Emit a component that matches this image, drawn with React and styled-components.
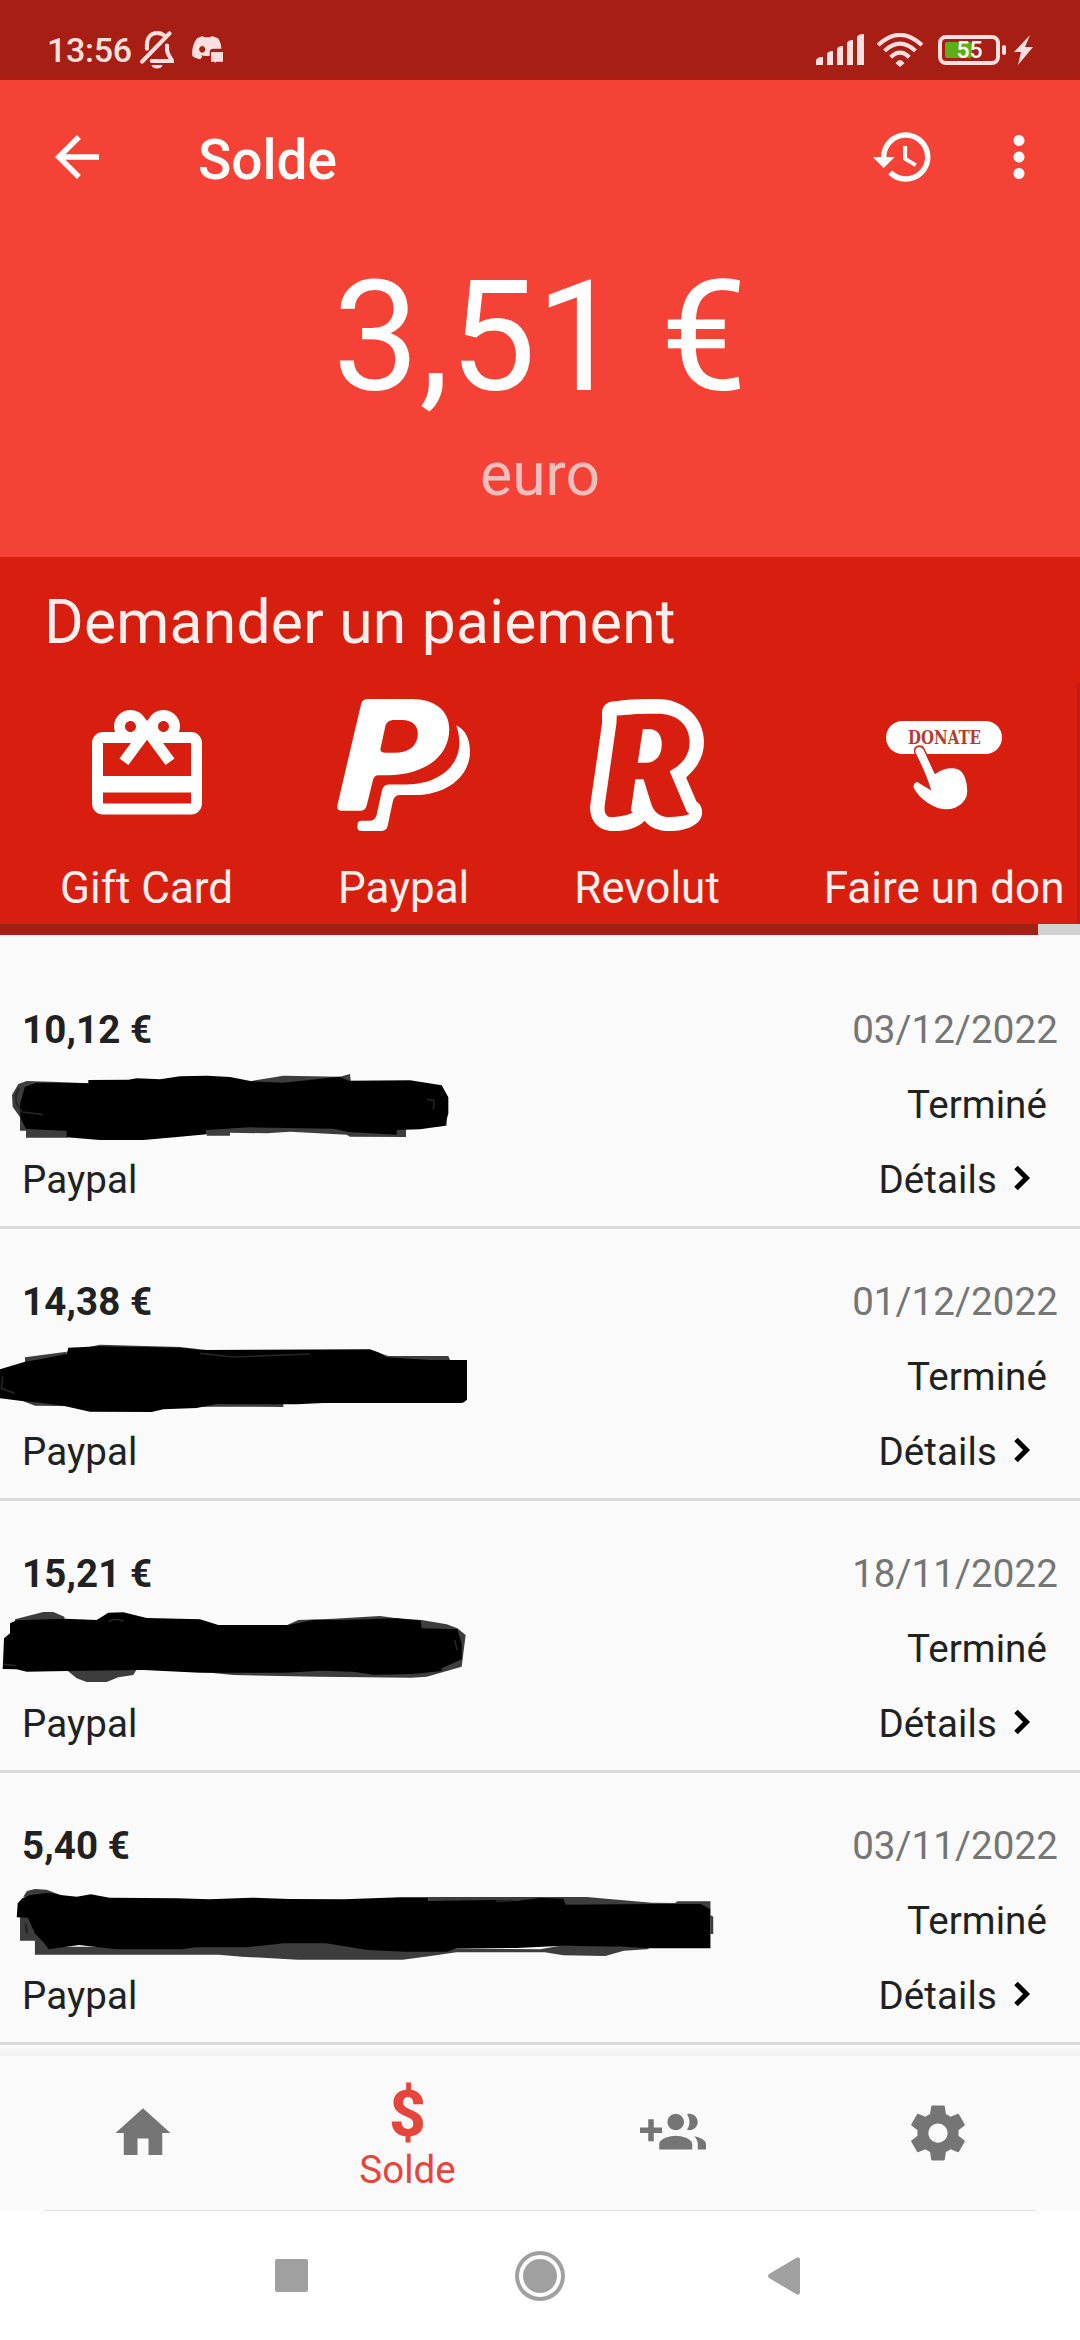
import React from 'react';
import styled, {createGlobalStyle} from 'styled-components';
import {MdHome} from 'react-icons/md';

const GlobalStyle = createGlobalStyle`
  body {
    margin: 0;
    background: #fff;
    font-family: Roboto, "Liberation Sans", sans-serif;
  }

  svg {
    display: block;
    flex: none;
  }
`;

const Screen = styled.div`
  display: flex;
  flex-direction: column;
  width: 1080px;
  height: 2340px;
  overflow: hidden;
  background: #fafafa;
`;

const StatusBar = styled.div`
  display: flex;
  justify-content: space-between;
  box-sizing: border-box;
  height: 80px;
  padding: 19px 47px 0;
  background: #a61e14;
  color: #ffe0de;
`;

const StatusGroup = styled.div`
  display: flex;
  align-items: center;
  gap: ${({$gap}) => $gap}px;
`;

const Clock = styled.span`
  width: 75px;
  padding-top: 1px;
  font-size: 34px;
  font-weight: 500;
  letter-spacing: -0.3px;
  line-height: 40px;
  white-space: nowrap;
`;

const Battery = styled.div`
  position: relative;
  display: flex;
  width: 68px;
  height: 30px;
  margin: 0 -5px 0 2px;
`;

const BatteryLevel = styled.span`
  position: absolute;
  left: 0;
  top: 1px;
  width: 63px;
  color: #fff;
  font-size: 23px;
  font-weight: 500;
  line-height: 30px;
  text-align: center;
`;

const Header = styled.header`
  height: 477px;
  background: #f44336;
  color: #fff;
`;

const Toolbar = styled.div`
  display: flex;
  align-items: center;
  height: 154px;
  padding: 0 28px 0 44px;
`;

const ToolbarTitle = styled.h1`
  flex: 1;
  margin: 0;
  padding: 6px 0 0 88px;
  font-size: 55px;
  font-weight: 500;
  line-height: 64px;
`;

const ToolbarActions = styled.div`
  display: flex;
  gap: 50px;
`;

const Balance = styled.div`
  padding-top: 14px;
  font-size: 154px;
  line-height: 180px;
  text-align: center;
`;

const Currency = styled.div`
  margin-top: 12px;
  color: #f0bebd;
  font-size: 60.5px;
  line-height: 70px;
  text-align: center;
`;

const Payout = styled.section`
  position: relative;
  box-sizing: border-box;
  height: 367px;
  padding-top: 31px;
  background: #d81e0f;
  color: #fff0ee;

  /* edge of the next card, still scrolled out of view */
  &::after {
    content: '';
    position: absolute;
    right: 0;
    top: 126px;
    bottom: 0;
    width: 3px;
    background: #c41c10;
  }
`;

const PayoutTitle = styled.h2`
  margin: 0 0 41px;
  padding-left: 44px;
  font-size: 60.5px;
  font-weight: 400;
  letter-spacing: 0.26px;
  line-height: 70px;
`;

const PayoutMethods = styled.div`
  display: flex;
  gap: 104px;
  padding-left: 60px;
`;

const Method = styled.div`
  display: flex;
  flex-direction: column;
  align-items: center;
`;

const MethodIcon = styled.div`
  display: flex;
  align-items: center;
  justify-content: center;
  height: 132px;
  margin-bottom: 31px;
  color: #fff;
`;

const MethodLabel = styled.span`
  font-size: 44px;
  line-height: 52px;
  white-space: nowrap;
`;

const ScrollTrack = styled.div`
  height: 11px;
  flex: none;
  background: #d2d2d2;
`;

const ScrollThumb = styled.div`
  width: 1038px;
  height: 11px;
  background: #a41f16;
`;

const History = styled.main`
  height: 1121px;
  box-sizing: border-box;
  padding-top: 22px;
  background: linear-gradient(#fafafa 1111px, #f2f2f2 1121px);
`;

const Row = styled.div`
  position: relative;
  display: flex;
  justify-content: space-between;
  box-sizing: border-box;
  height: 272px;
  padding: 35px 22px 0;
  border-bottom: 3px solid #dadada;
  color: #212121;
  font-size: 38.5px;
  letter-spacing: 0.1px;
  line-height: 75px;
`;

const Column = styled.div`
  display: flex;
  flex-direction: column;
  align-items: ${({$end}) => ($end ? 'flex-end' : 'flex-start')};
`;

const Amount = styled.span`
  height: 75px;
  font-weight: 700;
`;

const Provider = styled.span`
  margin-top: 75px;
`;

const DateText = styled.span`
  color: #757575;
`;

const Status = styled.span`
  padding-right: 11px;
`;

const Details = styled.span`
  display: flex;
  align-items: center;
  gap: 17px;
  padding-right: 27px;

  svg {
    margin-bottom: 4px;
  }
`;

const Marker = styled.svg`
  position: absolute;
  left: 0;
  top: ${({$top}) => $top}px;
`;

const BottomNav = styled.nav`
  display: grid;
  grid-template-columns: repeat(4, 265px);
  justify-content: center;
  height: 154px;
  background: #fafafa;
  color: #757575;
`;

const NavItem = styled.div`
  display: flex;
  flex-direction: column;
  align-items: center;
  justify-content: center;
  padding-top: ${({$active}) => ($active ? 8 : 0)}px;
  color: ${({$active}) => ($active ? '#e5453a' : 'inherit')};
`;

const Dollar = styled.span`
  font-size: 64px;
  font-weight: 800;
  line-height: 64px;
`;

const NavLabel = styled.span`
  font-size: 38.5px;
  line-height: 45px;
`;

const SystemBar = styled.div`
  display: flex;
  flex-direction: column;
  height: 130px;
  background: #fff;
`;

const SystemDivider = styled.div`
  height: 1px;
  margin: 0 44px;
  background: #e2e2e2;
`;

const SystemButtons = styled.div`
  display: flex;
  align-items: center;
  height: 129px;
  padding-left: 275px;
`;

const Recents = styled.div`
  width: 33px;
  height: 33px;
  border-radius: 2px;
  background: #a0a0a0;
`;

const HomeRing = styled.div`
  display: flex;
  align-items: center;
  justify-content: center;
  box-sizing: border-box;
  width: 50px;
  height: 50px;
  margin: 0 203px 0 207px;
  border: 4px solid #a0a0a0;
  border-radius: 50%;
`;

const HomeDot = styled.div`
  width: 34px;
  height: 34px;
  border-radius: 50%;
  background: #a0a0a0;
`;

const MaterialIcon = ({size, d}) => (
  <svg width={size} height={size} viewBox="0 0 24 24" fill="currentColor">
    <path d={d} />
  </svg>
);

const icons = {
  back: 'M20 11H7.83l5.59-5.59L12 4l-8 8 8 8 1.41-1.41L7.83 13H20v-2z',
  history: 'M13 3a9 9 0 0 0-9 9H1l3.89 3.89.07.14L9 12H6c0-3.87 3.13-7 7-7s7 3.13 7 7-3.13 7-7 7c-1.93 0-3.68-.79-4.94-2.06l-1.42 1.42A8.954 8.954 0 0 0 13 21a9 9 0 0 0 0-18zm-1 5v5l4.28 2.54.72-1.21-3.5-2.08V8H12z',
  more: 'M12 8c1.1 0 2-.9 2-2s-.9-2-2-2-2 .9-2 2 .9 2 2 2zm0 2c-1.1 0-2 .9-2 2s.9 2 2 2 2-.9 2-2-.9-2-2-2zm0 6c-1.1 0-2 .9-2 2s.9 2 2 2 2-.9 2-2-.9-2-2-2z',
  gift: 'M20 6h-2.18c.11-.31.18-.65.18-1a2.996 2.996 0 0 0-5.5-1.65l-.5.67-.5-.68C10.96 2.54 10.05 2 9 2 7.34 2 6 3.34 6 5c0 .35.07.69.18 1H4c-1.11 0-1.99.89-1.99 2L2 19c0 1.11.89 2 2 2h16c1.11 0 2-.89 2-2V8c0-1.11-.89-2-2-2zm-5-2c.55 0 1 .45 1 1s-.45 1-1 1-1-.45-1-1 .45-1 1-1zM9 4c.55 0 1 .45 1 1s-.45 1-1 1-1-.45-1-1 .45-1 1-1zm11 15H4v-2h16v2zm0-5H4V8h5.08L7 10.83 8.62 12 11 8.76l1-1.36 1 1.36L15.38 12 17 10.83 14.92 8H20v6z',
  invite: 'M8 10H5V7H3v3H0v2h3v3h2v-3h3v-2zm10 1c1.66 0 2.99-1.34 2.99-3S19.66 5 18 5c-.32 0-.63.05-.91.14.57.81.9 1.79.9 2.86s-.34 2.04-.9 2.86c.28.09.59.14.91.14zm-5 0c1.66 0 2.99-1.34 2.99-3S14.66 5 13 5s-3 1.34-3 3 1.34 3 3 3zm6.62 2.16c.83.73 1.38 1.66 1.38 2.84v2h3v-2c0-1.54-2.37-2.49-4.38-2.84zM13 13c-2 0-6 1-6 3v2h12v-2c0-2-4-3-6-3z',
  settings: 'M19.43 12.98c.04-.32.07-.64.07-.98s-.03-.66-.07-.98l2.11-1.65c.19-.15.24-.42.12-.64l-2-3.46c-.12-.22-.39-.3-.61-.22l-2.49 1c-.52-.4-1.08-.73-1.69-.98l-.38-2.65C14.46 2.18 14.25 2 14 2h-4c-.25 0-.46.18-.49.42l-.38 2.65c-.61.25-1.17.59-1.69.98l-2.49-1c-.23-.09-.49 0-.61.22l-2 3.46c-.13.22-.07.49.12.64l2.11 1.65c-.04.32-.07.65-.07.98s.03.66.07.98l-2.11 1.65c-.19.15-.24.42-.12.64l2 3.46c.12.22.39.3.61.22l2.49-1c.52.4 1.08.73 1.69.98l.38 2.65c.03.24.24.42.49.42h4c.25 0 .46-.18.49-.42l.38-2.65c.61-.25 1.17-.59 1.69-.98l2.49 1c.23.09.49 0 .61-.22l2-3.46c.12-.22.07-.49-.12-.64l-2.11-1.65zM12 15.5c-1.93 0-3.5-1.57-3.5-3.5s1.57-3.5 3.5-3.5 3.5 1.57 3.5 3.5-1.57 3.5-3.5 3.5z',
};

const MutedBell = () => (
  <svg width="34" height="38" viewBox="408 93 98 113" preserveAspectRatio="none" fill="none" stroke="currentColor" strokeWidth="12" strokeLinecap="round">
    <path d="M414 184L493 100M428 146v-11c0-23 12-36 29-36 8 0 14 2 19 6" />
    <path d="M486 136v14c1 16 12 22 14 32h-58" />
    <path d="M441 194h32c-3 14-29 14-32 0z" fill="currentColor" stroke="none" />
  </svg>
);

const DiscordChat = () => (
  <svg width="31" height="27" viewBox="557 110 91 81" preserveAspectRatio="none" fill="currentColor">
    <path
      fillRule="evenodd"
      d="M572 117l16-7 5 4h18l5-4 17 7c7 9 10 20 10 31h-24c-7 0-10 4-10 10v11c-9 1-17 1-25-1l3 4-6 8c-8-2-17-5-23-10-2-18 2-38 14-53zm15 23a9 10 0 1 0 .1 0z"
    />
    <path d="M613 158h35v29h-20l-4 5v-5h-11z" />
  </svg>
);

const Signal = () => (
  <svg width="48" height="31" viewBox="0 0 48 31" fill="currentColor">
    <path d="M0 31v-4q0-4 7-4v8zM11 31V20q1-3 6-3v14zM21 31V15q1-3 6-3v19zM31 31V9q1-3 6-3v25zM41 31V3q1-3 7-3v31z" />
  </svg>
);

const Wifi = () => (
  <svg width="46" height="34" viewBox="978 97 134 101" preserveAspectRatio="none" fill="none" stroke="currentColor" strokeWidth="12">
    <path d="M981 133Q1045 72 1109 133M1000 150Q1045 107 1090 150M1018 169Q1045 142 1072 169" />
    <path d="M1032 187Q1045 168 1058 187L1045 198z" fill="currentColor" stroke="none" />
  </svg>
);

const BatteryShape = () => (
  <svg width="68" height="30" viewBox="0 0 68 30">
    <rect x="2" y="2" width="58" height="26" rx="6" fill="none" stroke="currentColor" strokeWidth="4" />
    <rect x="7" y="7" width="27" height="16" rx="2" fill="#5eae1a" />
    <rect x="64" y="10" width="4" height="10" rx="2" fill="currentColor" />
  </svg>
);

const Bolt = () => (
  <svg width="19" height="30" viewBox="0 0 19 30" fill="currentColor">
    <path d="M16 0L0 17h7L4 30l15-18h-8z" />
  </svg>
);

const PaypalLogo = () => (
  <svg width="133" height="132" viewBox="984 416 385 397" preserveAspectRatio="none" fill="currentColor">
    <path
      fillRule="evenodd"
      d="M1074 416h126c66 0 109 34 109 90 0 86-76 139-178 139h-26c-10 0-15 6-17 15l-18 76c-3 11-9 16-20 16h-52c-10 0-15-6-13-16l69-306c2-9 9-14 20-14zM1150 479c-14 0-23 6-26 19l-14 66c-2 9 4 14 15 14h25c44 0 68-22 68-58 0-26-19-41-44-41z"
    />
    <path d="M1329 496c25 10 40 40 40 78 0 73-66 131-160 131h-42c-11 0-18 6-21 17l-15 74c-2 11-8 17-19 17h-58c-8 0-12-6-11-14l1-10c1-5 5-7 11-7h20c14 0 21-6 24-19l15-71c3-13 9-19 22-19h49c90 0 153-53 153-125 0-19-3-37-9-52z" />
  </svg>
);

const RevolutLogo = () => (
  <svg width="114" height="132" viewBox="148 416 332 397" preserveAspectRatio="none">
    <path
      fill="#fff"
      d="M222 423C265 415 310 416 345 416c75 0 135 55 135 129 0 44-20 78-52 107l30 72c13 8 18 22 16 40-5 30-45 49-94 49-34 0-58-11-73-31-19 21-49 31-92 31-40 0-67-28-67-73l35-250v-34c2-21 14-32 39-33z"
    />
    <path
      fill="#d81e0f"
      d="M226 466c40-5 75-6 119-6 55 0 93 32 93 85 0 40-21 68-58 88l50 122 8 7c-18 7-37 9-58 9-28 0-45-13-54-41l-22-73h-24l-13 95 6 5c-18 9-37 13-68 14-14-5-16-20-14-36l34-245z"
    />
    <path fill="#fff" d="M302 506h18c24 0 37 19 37 46 0 33-17 56-47 56h-23z" />
  </svg>
);

const DonateIcon = () => (
  <svg width="116" height="132" viewBox="0 0 116 132">
    <rect y="22" width="116" height="33" rx="16.5" fill="#fff" />
    <text x="22" y="45" textLength="73" lengthAdjust="spacingAndGlyphs" fontFamily="DejaVu Serif, serif" fontSize="18" fontWeight="700" fill="#b8392e">
      DONATE
    </text>
    <path
      d="M29 54c-2-7 6-9 9-4l11 24c8-5 17-7 24-4 6 3 9 13 9 22 0 10-9 19-22 19-13 0-27-11-33-22-1-6 4-8 7-5l10 6c-3-11-9-24-15-36z"
      fill="#fff"
      stroke="#c8271a"
      strokeWidth="1.5"
    />
  </svg>
);

const Chevron = () => (
  <svg width="17" height="26" viewBox="0 0 17 26" fill="none" stroke="#000" strokeWidth="5">
    <path d="M2 2.5L12.500 13 2 23.500" />
  </svg>
);

const methods = [
  {label: 'Gift Card', icon: <MaterialIcon size={132} d={icons.gift} />},
  {label: 'Paypal', icon: <PaypalLogo />},
  {label: 'Revolut', icon: <RevolutLogo />},
  {label: 'Faire un don', icon: <DonateIcon />},
];

// Marker strokes that hide the account of each payment: grey first pass, black on top.
const payments = [
  {
    amount: '10,12 €',
    date: '03/12/2022',
    marker: {
      top: 113,
      width: 480,
      height: 73,
      viewBox: '0 270 1440 219',
      grey: 'M36 345L55 312 80 303 175 306 265 310V440L200 473 78 473V452H60V412L38 380zM620 445L750 440 1218 447V471L1050 470 1040 464 870 455 800 460 690 458V467H620zM755 303L850 287 1020 290 1050 282 1053 310 755 320zM1300 420L1340 415V437L1300 440z',
      black: 'M75 320L110 308 265 310V300L385 299 410 295 480 298 540 289 620 287 690 291 755 304 850 308 1020 290 1045 302 1230 301 1325 316 1345 352V400L1335 437 1260 448 1190 450V464L1045 456 1000 446 750 442 620 450V463L540 470 430 480H300L200 472V452L78 447 62 415 60 372z',
      glints: 'M58 325Q32 360 68 396L130 404M1280 358L1302 362 1300 388',
    },
  },
  {
    amount: '14,38 €',
    date: '01/12/2022',
    marker: {
      top: 111,
      width: 480,
      height: 74,
      viewBox: '0 210 1440 222',
      grey: 'M75 262L200 245V270L75 285zM1110 240L1165 258 1345 258 1365 305 1110 275zM60 390L850 396V411L640 410 490 412 105 407zM270 230L300 224 540 231 620 240 300 245z',
      black: 'M0 298L75 275 120 268 200 252 205 233 300 229 540 233 600 240 1110 238 1140 249 1160 262 1290 270H1401V389L1393 396 1385 399H970L890 403 650 402 590 414 490 418 455 426 270 425 190 407 120 398 60 392 0 385z',
      glints: 'M600 250L700 261 930 252M8 318L4 355 44 370',
    },
  },
  {
    amount: '15,21 €',
    date: '18/11/2022',
    marker: {
      top: 109,
      width: 480,
      height: 74,
      viewBox: '0 210 1440 222',
      grey: 'M45 238L130 216H160L193 230 195 245 45 250zM200 390L410 388 400 405 355 412 320 426H260L230 415zM860 256L895 240 1000 236 1140 228 1190 235 1265 240 1340 253 1372 265 1397 285 1385 380 1280 410 1235 413 955 410 700 405 600 395z',
      black: 'M30 250L50 241 195 236 290 240 325 218 370 217 440 234 600 238 655 255H865L940 240 1030 240 1190 235 1262 242 1265 265 1372 268 1385 310V358L1325 385V393L1240 402 1120 404 1060 395 960 392 860 398H600L430 390 200 393 80 395 50 388 8 387 10 345 12 295 30 280z',
      glints: 'M325 245Q345 232 372 244M10 373L48 377M1364 300L1372 332',
    },
  },
  {
    amount: '5,40 €',
    date: '03/11/2022',
    marker: {
      top: 115,
      width: 730,
      height: 74,
      viewBox: '0 264 1568 222',
      grey: 'M50 290L58 273 75 267 100 269 130 285V300zM43 350H60L100 430 110 440 300 440 640 425 980 445 1160 448 1210 436 1400 440 1390 448 1340 452 1300 468 1210 466 1170 457H980L925 468 865 479H640L520 470 470 464H75V422H43zM920 291H1260L1400 308 1450 309 1455 304H1526V330L920 315zM1526 345L1532 350V402H1526z',
      black: 'M48 295L65 285 105 278 130 285 165 290 195 283 235 293 380 295 450 298 540 293 620 297 740 298 860 292H920V303L1060 300 1110 303 1160 294 1210 296 1215 314 1400 312 1505 312 1526 328V445H1390L1340 440 1210 437 1110 444 980 445 960 455H870L790 450 700 430H610L530 442H420L390 448H250L170 435 105 448 95 430 75 400 60 353 36 352 38 310z',
      glints: 'M1065 304L1100 302M55 370L58 400',
    },
  },
];

const MarkerStroke = ({marker}) => (
  <Marker $top={marker.top} width={marker.width} height={marker.height} viewBox={marker.viewBox} preserveAspectRatio="none">
    <path d={marker.grey} fill="#3d3d3d" />
    <path d={marker.black} fill="#000" />
    <path d={marker.glints} fill="none" stroke="#242424" strokeWidth="5" />
  </Marker>
);

const PaymentRow = ({payment}) => (
  <Row>
    <Column>
      <Amount>{payment.amount}</Amount>
      <Provider>Paypal</Provider>
    </Column>
    <Column $end>
      <DateText>{payment.date}</DateText>
      <Status>Terminé</Status>
      <Details>
        Détails
        <Chevron />
      </Details>
    </Column>
    <MarkerStroke marker={payment.marker} />
  </Row>
);

function App() {
  return (
    <Screen>
      <GlobalStyle />

      <StatusBar>
        <StatusGroup $gap={18}>
          <Clock>13:56</Clock>
          <MutedBell />
          <DiscordChat />
        </StatusGroup>
        <StatusGroup $gap={13}>
          <Signal />
          <Wifi />
          <Battery>
            <BatteryShape />
            <BatteryLevel>55</BatteryLevel>
          </Battery>
          <Bolt />
        </StatusGroup>
      </StatusBar>

      <Header>
        <Toolbar>
          <MaterialIcon size={66} d={icons.back} />
          <ToolbarTitle>Solde</ToolbarTitle>
          <ToolbarActions>
            <MaterialIcon size={66} d={icons.history} />
            <MaterialIcon size={66} d={icons.more} />
          </ToolbarActions>
        </Toolbar>
        <Balance>3,51 €</Balance>
        <Currency>euro</Currency>
      </Header>

      <Payout>
        <PayoutTitle>Demander un paiement</PayoutTitle>
        <PayoutMethods>
          {methods.map(({label, icon}) => (
            <Method key={label}>
              <MethodIcon>{icon}</MethodIcon>
              <MethodLabel>{label}</MethodLabel>
            </Method>
          ))}
        </PayoutMethods>
      </Payout>
      <ScrollTrack>
        <ScrollThumb />
      </ScrollTrack>

      <History>
        {payments.map(payment => (
          <PaymentRow key={payment.date} payment={payment} />
        ))}
      </History>

      <BottomNav>
        <NavItem>
          <MdHome size={66} />
        </NavItem>
        <NavItem $active>
          <Dollar>$</Dollar>
          <NavLabel>Solde</NavLabel>
        </NavItem>
        <NavItem>
          <MaterialIcon size={66} d={icons.invite} />
        </NavItem>
        <NavItem>
          <MaterialIcon size={66} d={icons.settings} />
        </NavItem>
      </BottomNav>

      <SystemBar>
        <SystemDivider />
        <SystemButtons>
          <Recents />
          <HomeRing>
            <HomeDot />
          </HomeRing>
          <svg width="32" height="38" viewBox="0 0 32 38" fill="#a0a0a0">
            <path d="M1 17L28 1q4-2 4 2v32q0 4-4 2L1 21q-2-2 0-4z" />
          </svg>
        </SystemButtons>
      </SystemBar>
    </Screen>
  );
}

export default App;
